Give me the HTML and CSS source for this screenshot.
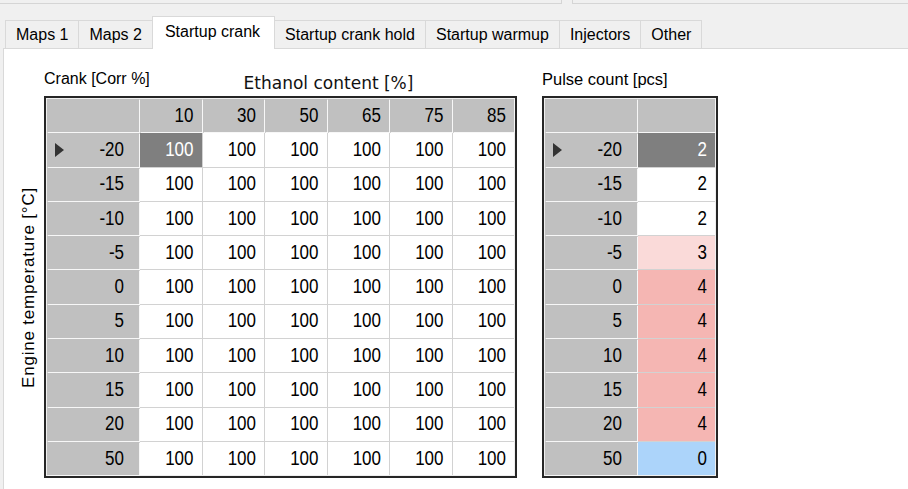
FILE: index.html
```html
<!DOCTYPE html>
<html>
  <head>
    <meta name="viewport" content="width=device-width, initial-scale=1.0" />
    <title>Startup crank</title>
    <link rel="stylesheet" href="styles.css">
  </head>

  <body>
    <!-- top group boxes (cut off) -->
    <div class="topbar">
      <div class="box box-left"></div>
      <div class="box box-right"></div>
    </div>

    <!-- tabs -->
    <div class="tabs">
      <div class="tab">Maps 1</div>
      <div class="tab">Maps 2</div>
      <div class="tab active">Startup crank</div>
      <div class="tab">Startup crank hold</div>
      <div class="tab">Startup warmup</div>
      <div class="tab">Injectors</div>
      <div class="tab last">Other</div>
    </div>

    <div class="panel">
      <!-- crank correction map -->
      <div class="map map-main">
        <div class="map-head">
          <div class="map-title">Crank [Corr %]</div>
          <div class="axis-title">Ethanol content [%]</div>
        </div>
        <div class="yaxis"><span>Engine temperature [°C]</span></div>
        <div class="grid grid-main">
          <div class="hd"></div><div class="hd"><span>10</span></div><div class="hd"><span>30</span></div><div class="hd"><span>50</span></div><div class="hd"><span>65</span></div><div class="hd"><span>75</span></div><div class="hd"><span>85</span></div>
          <div class="hd rh cur"><svg class="arrow" width="9" height="14" viewBox="0 0 9 14"><path d="M0 0L9 7L0 14Z"/></svg><span>-20</span></div><div class="sel"><span>100</span></div><div><span>100</span></div><div><span>100</span></div><div><span>100</span></div><div><span>100</span></div><div><span>100</span></div>
          <div class="hd rh"><span>-15</span></div><div><span>100</span></div><div><span>100</span></div><div><span>100</span></div><div><span>100</span></div><div><span>100</span></div><div><span>100</span></div>
          <div class="hd rh"><span>-10</span></div><div><span>100</span></div><div><span>100</span></div><div><span>100</span></div><div><span>100</span></div><div><span>100</span></div><div><span>100</span></div>
          <div class="hd rh"><span>-5</span></div><div><span>100</span></div><div><span>100</span></div><div><span>100</span></div><div><span>100</span></div><div><span>100</span></div><div><span>100</span></div>
          <div class="hd rh"><span>0</span></div><div><span>100</span></div><div><span>100</span></div><div><span>100</span></div><div><span>100</span></div><div><span>100</span></div><div><span>100</span></div>
          <div class="hd rh"><span>5</span></div><div><span>100</span></div><div><span>100</span></div><div><span>100</span></div><div><span>100</span></div><div><span>100</span></div><div><span>100</span></div>
          <div class="hd rh"><span>10</span></div><div><span>100</span></div><div><span>100</span></div><div><span>100</span></div><div><span>100</span></div><div><span>100</span></div><div><span>100</span></div>
          <div class="hd rh"><span>15</span></div><div><span>100</span></div><div><span>100</span></div><div><span>100</span></div><div><span>100</span></div><div><span>100</span></div><div><span>100</span></div>
          <div class="hd rh"><span>20</span></div><div><span>100</span></div><div><span>100</span></div><div><span>100</span></div><div><span>100</span></div><div><span>100</span></div><div><span>100</span></div>
          <div class="hd rh"><span>50</span></div><div><span>100</span></div><div><span>100</span></div><div><span>100</span></div><div><span>100</span></div><div><span>100</span></div><div><span>100</span></div>
        </div>
      </div>

      <!-- pulse count map -->
      <div class="map map-pulse">
        <div class="map-head">
          <div class="map-title">Pulse count [pcs]</div>
        </div>
        <div class="grid grid-pulse">
          <div class="hd"></div><div class="hd"></div>
          <div class="hd rh cur"><svg class="arrow" width="9" height="14" viewBox="0 0 9 14"><path d="M0 0L9 7L0 14Z"/></svg><span>-20</span></div><div class="sel"><span>2</span></div>
          <div class="hd rh"><span>-15</span></div><div><span>2</span></div>
          <div class="hd rh"><span>-10</span></div><div><span>2</span></div>
          <div class="hd rh"><span>-5</span></div><div class="lo"><span>3</span></div>
          <div class="hd rh"><span>0</span></div><div class="hi"><span>4</span></div>
          <div class="hd rh"><span>5</span></div><div class="hi"><span>4</span></div>
          <div class="hd rh"><span>10</span></div><div class="hi"><span>4</span></div>
          <div class="hd rh"><span>15</span></div><div class="hi"><span>4</span></div>
          <div class="hd rh"><span>20</span></div><div class="hi"><span>4</span></div>
          <div class="hd rh"><span>50</span></div><div class="zero"><span>0</span></div>
        </div>
      </div>
    </div>
  </body>
</html>
```

FILE: styles.css
```css
body {
  margin: 0;
  height: 489px;
  overflow: hidden;
  background: #f0f0f0;
  font-family: "Liberation Sans", Arial, sans-serif;
  color: #000;
}

/* top group boxes */
.topbar {
  display: flex;
  gap: 10px;
}

.topbar .box {
  height: 3px;
  border: 1px solid #d5d5d5;
  border-top: none;
}

.box-left {
  width: 561px;
  border-left: none !important;
}

.box-right {
  flex: 1;
  border-right: none !important;
}

/* tabs */
.tabs {
  display: flex;
  align-items: flex-end;
  height: 44px;
  padding-left: 5px;
}

.tab {
  box-sizing: border-box;
  height: 28px;
  padding: 0 10px;
  display: flex;
  align-items: center;
  font-size: 16px;
  white-space: nowrap;
  border-top: 1px solid #d9d9d9;
  border-left: 1px solid #d9d9d9;
}

.tab.last {
  border-right: 1px solid #d9d9d9;
}

.tab.active {
  position: relative;
  z-index: 1;
  height: 33px;
  margin-bottom: -1px;
  padding: 0 14px 3px 12px;
  background: #fff;
  border-right: 1px solid #d9d9d9;
}

.tab.active + .tab {
  border-left: none;
}

/* tab page */
.panel {
  display: flex;
  height: 440px;
  margin-left: 3px;
  background: #fff;
  border-top: 1px solid #d9d9d9;
  border-left: 1px solid #d9d9d9;
}

.map {
  display: grid;
  grid-template-rows: 47px auto;
  align-content: start;
}

.map-main {
  grid-template-columns: 40px auto;
}

.map-main .map-head {
  grid-column: 2;
}

.map-pulse {
  margin-left: 25px;
}

.map-head {
  display: grid;
  grid-template-columns: 96px 1fr;
  white-space: nowrap;
}

.map-title {
  padding-top: 21px;
  font-size: 16px;
  line-height: 18px;
}

.map-pulse .map-title {
  font-size: 16.5px;
}

.axis-title {
  padding-top: 25px;
  font-family: "DejaVu Sans", Verdana, sans-serif;
  font-size: 17px;
  line-height: 18px;
  text-align: center;
  color: #111;
}

.yaxis {
  grid-row: 2;
  display: flex;
  align-items: center;
  justify-content: flex-end;
  padding-right: 5px;
}

.yaxis span {
  writing-mode: vertical-rl;
  transform: rotate(180deg);
  font-size: 17px;
  letter-spacing: 0.8px;
  white-space: nowrap;
}

/* data grids */
.grid {
  display: grid;
  gap: 1px;
  padding: 1px;
  background: #d2d2d2;
  border: 2px solid #262626;
  box-shadow: inset 0 0 0 1px #efefef;
  grid-template-rows: repeat(11, 33.3px);
}

.grid-main {
  grid-template-columns: 92px repeat(6, 61.5px);
}

.grid-pulse {
  grid-template-columns: 92px 77px;
}

.grid > div {
  display: flex;
  align-items: center;
  justify-content: flex-end;
  padding-right: 8px;
  background: #fff;
  font-size: 17px;
}

.grid span {
  display: inline-block;
  transform: scaleY(1.18);
}

.grid .hd {
  background: #c0c0c0;
  box-shadow: 1px 1px 0 #f7f7f7;
}

.grid .rh {
  padding-right: 15px;
}

.grid .cur {
  justify-content: space-between;
  padding-left: 8px;
}

.arrow {
  fill: #333;
}

.grid .sel {
  background: #7f7f7f;
  color: #fff;
}

.grid .lo {
  background: #fadad9;
}

.grid .hi {
  background: #f5b6b3;
}

.grid .zero {
  background: #acd4fa;
}
```
